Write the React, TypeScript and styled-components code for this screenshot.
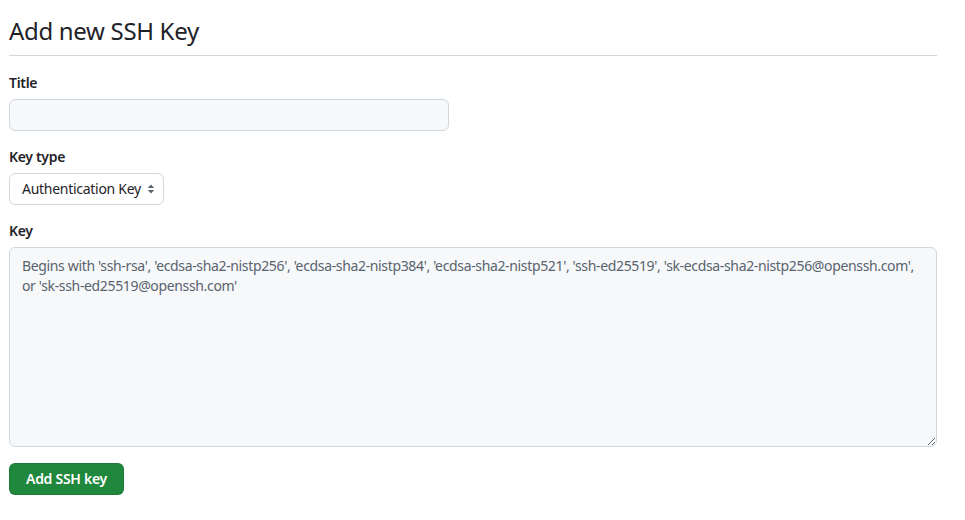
import React from 'react'
import styled, { createGlobalStyle } from 'styled-components'

const GlobalStyle = createGlobalStyle`
  body {
    margin: 0;
    background: #ffffff;
    color: #1f2328;
    font-family: "Noto Sans", "Liberation Sans", sans-serif;
    letter-spacing: -0.02em;
  }
`

const App = () => {
  const [title, setTitle] = React.useState('')
  const [keyType, setKeyType] = React.useState('authentication')
  const [key, setKey] = React.useState('')

  return (
    <>
      <GlobalStyle />
      <Page>
        <Subhead>
          <Heading>Add new SSH Key</Heading>
        </Subhead>
        <form onSubmit={(e) => e.preventDefault()}>
          <Group>
            <Label htmlFor="title">Title</Label>
            <Input id="title" value={title} onChange={(e) => setTitle(e.target.value)} />
          </Group>
          <Group>
            <Label htmlFor="type">Key type</Label>
            <SelectWrap>
              <Select id="type" value={keyType} onChange={(e) => setKeyType(e.target.value)}>
                <option value="authentication">Authentication Key</option>
                <option value="signing">Signing Key</option>
              </Select>
              <Caret width="8" height="12" viewBox="0 0 8 12">
                <path d="M4 1.5 L7.2 5 H0.8 Z" fill="#59636e" />
                <path d="M4 10.5 L7.2 7 H0.8 Z" fill="#59636e" />
              </Caret>
            </SelectWrap>
          </Group>
          <Group>
            <Label htmlFor="key">Key</Label>
            <TextArea
              id="key"
              value={key}
              onChange={(e) => setKey(e.target.value)}
              placeholder="Begins with 'ssh-rsa', 'ecdsa-sha2-nistp256', 'ecdsa-sha2-nistp384', 'ecdsa-sha2-nistp521', 'ssh-ed25519', 'sk-ecdsa-sha2-nistp256@openssh.com', or 'sk-ssh-ed25519@openssh.com'"
            />
          </Group>
          <Button type="submit">Add SSH key</Button>
        </form>
      </Page>
    </>
  )
}

export default App

const Page = styled.div`
  width: 928px;
  padding: 13px 0 0 9px;
`

const Subhead = styled.div`
  border-bottom: 1px solid #d1d9e0;
  padding-bottom: 6px;
  margin-bottom: 17px;
`

const Heading = styled.h2`
  margin: 0;
  font-size: 24px;
  font-weight: 400;
  line-height: 36px;
  color: #1f2328;
`

const Group = styled.div`
  margin-bottom: 16px;
`

const Label = styled.label`
  display: block;
  font-size: 14px;
  font-weight: 600;
  line-height: 20px;
  margin-bottom: 6px;
  color: #1f2328;
`

const fieldBase = `
  box-sizing: border-box;
  font-family: inherit;
  font-size: 14px;
  line-height: 20px;
  letter-spacing: -0.02em;
  color: #1f2328;
  border: 1px solid #d1d9e0;
  border-radius: 6px;
  outline: none;
`

const Input = styled.input`
  ${fieldBase}
  display: block;
  width: 440px;
  height: 32px;
  padding: 5px 12px;
  background: #f6f8fa;
`

const SelectWrap = styled.div`
  position: relative;
  display: inline-block;
  vertical-align: top;
`

const Select = styled.select`
  ${fieldBase}
  display: block;
  appearance: none;
  width: 155px;
  height: 32px;
  padding: 5px 20px 5px 12px;
  background: #ffffff;
`

const Caret = styled.svg`
  position: absolute;
  right: 9px;
  top: 10px;
  pointer-events: none;
`

const TextArea = styled.textarea`
  ${fieldBase}
  display: block;
  width: 928px;
  height: 200px;
  padding: 8px 12px;
  letter-spacing: -0.025em;
  background: #f6f8fa;
  resize: both;
  &::placeholder {
    color: #59636e;
    opacity: 1;
  }
`

const Button = styled.button`
  box-sizing: border-box;
  height: 32px;
  padding: 0 16px;
  font-family: inherit;
  font-size: 14px;
  font-weight: 600;
  line-height: 20px;
  letter-spacing: -0.02em;
  color: #ffffff;
  background: #1f883d;
  border: 1px solid rgba(31, 35, 40, 0.15);
  border-radius: 6px;
  cursor: pointer;
`
